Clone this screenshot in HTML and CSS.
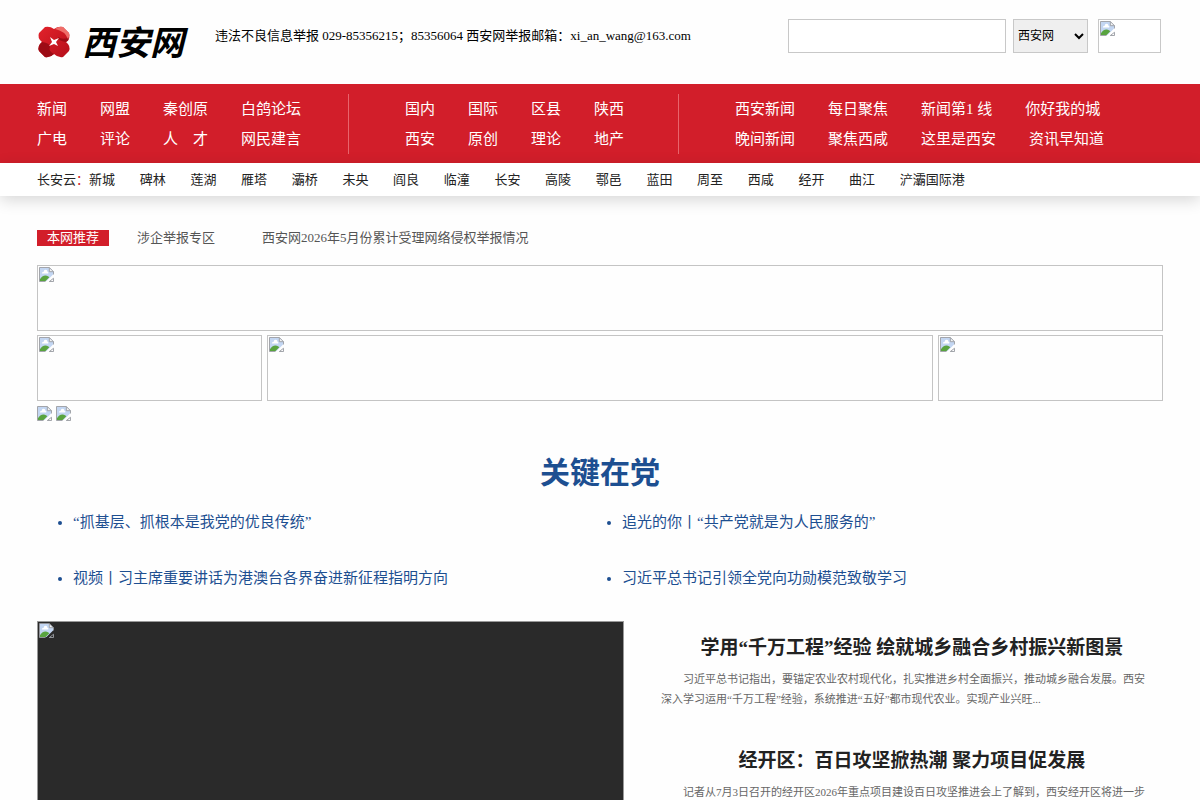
FILE: index.html
```
<!DOCTYPE html>
<html lang="zh-CN">
<head>
    <meta charset="UTF-8">
    <meta name="viewport" content="width=device-width, initial-scale=1.0">
    <title>西安网</title>
    <link rel="stylesheet" href="styles.css">
</head>
<body>

    <svg class="sprite" aria-hidden="true">
        <symbol id="pic" viewBox="0 0 16 16">
            <path d="M1 1h10l4 4v3L8 15H1z" fill="#c3d6f2"/>
            <path d="M3 7a2 2 0 0 1 2-2 2 2 0 0 1 4 0 1 1 0 0 1 0 2z" fill="#fff"/>
            <path d="M1 15v-2c2-3 5-5 9-3l1 1-4 4z" fill="#59a43f"/>
            <path d="M11 1v4h4z" fill="#f4f4f4"/>
            <path d="M15.500 8V5L11 .5H.5v15H7M11 .5V5h4.500M11 15.500h4.500V12z" fill="none" stroke="#9a9da3"/>
        </symbol>
    </svg>

    <header class="container">
        <a class="logo" href="#" aria-label="西安网">
            <svg width="154" height="46" viewBox="0 0 154 46">
                <defs>
                    <linearGradient id="petal" x1="0" y1="0" x2="1" y2="1">
                        <stop offset="0" stop-color="#e3222b"/>
                        <stop offset="1" stop-color="#b50f1a"/>
                    </linearGradient>
                </defs>
                <g transform="translate(17 23)">
                    <path d="M0-13Q4-16 9-15L15-9Q17-4 12 0Q17 4 15 9L9 15Q4 16 0 12Q-4 16-9 15L-15 9Q-17 4-12 0Q-17-4-15-9L-9-15Q-4-16 0-13z" fill="url(#petal)"/>
                    <path d="M-12 0Q-4 1-4 5Q-6 9 0 12Q-4 16-9 15L-15 9Q-17 4-12 0zM12 0Q4-1 4-5Q8-2 14-4Q16-2 12 0z" fill="#9c0c15"/>
                    <path d="M1-13Q5-16 9-15L15-9Q16-6 14-3Q11-11 1-13z" fill="#ef6d68"/>
                    <path d="M-4-5L0-2L5-4L2 0L4 4L0 2L-5 4L-2 0z" fill="#fff"/>
                </g>
                <text class="logo-text" x="45" y="36">西安网</text>
            </svg>
        </a>
        <p class="report">违法不良信息举报 029-85356215；85356064 西安网举报邮箱：xi_an_wang@163.com</p>
        <form class="search" action="#">
            <input type="text" name="q" aria-label="搜索">
            <select name="site" aria-label="站点">
                <option>西安网</option>
            </select>
            <button type="submit" aria-label="搜索"><svg class="pic"><use href="#pic"/></svg></button>
        </form>
    </header>

    <nav class="main-nav">
        <div class="container nav-groups">
            <div class="group">
                <div class="row"><a href="#">新闻</a><a href="#">网盟</a><a href="#">秦创原</a><a href="#">白鸽论坛</a></div>
                <div class="row"><a href="#">广电</a><a href="#">评论</a><a href="#">人　才</a><a href="#">网民建言</a></div>
            </div>
            <div class="group">
                <div class="row"><a href="#">国内</a><a href="#">国际</a><a href="#">区县</a><a href="#">陕西</a></div>
                <div class="row"><a href="#">西安</a><a href="#">原创</a><a href="#">理论</a><a href="#">地产</a></div>
            </div>
            <div class="group">
                <div class="row"><a href="#">西安新闻</a><a href="#">每日聚焦</a><a href="#">新闻第1 线</a><a href="#">你好我的城</a></div>
                <div class="row"><a href="#">晚间新闻</a><a href="#">聚焦西咸</a><a href="#">这里是西安</a><a href="#">资讯早知道</a></div>
            </div>
        </div>
    </nav>

    <nav class="sub-nav">
        <div class="container districts">
            <span>长安云<b>：</b></span>
            <div class="district-list">
                <a href="#">新城</a>
                <a href="#">碑林</a>
                <a href="#">莲湖</a>
                <a href="#">雁塔</a>
                <a href="#">灞桥</a>
                <a href="#">未央</a>
                <a href="#">阎良</a>
                <a href="#">临潼</a>
                <a href="#">长安</a>
                <a href="#">高陵</a>
                <a href="#">鄠邑</a>
                <a href="#">蓝田</a>
                <a href="#">周至</a>
                <a href="#">西咸</a>
                <a href="#">经开</a>
                <a href="#">曲江</a>
                <a href="#">浐灞国际港</a>
            </div>
        </div>
    </nav>

    <main class="container">
        <div class="recommend">
            <span class="tag">本网推荐</span>
            <a href="#">涉企举报专区</a>
            <a href="#">西安网2026年5月份累计受理网络侵权举报情况</a>
        </div>

        <div class="banners">
            <a class="banner wide" href="#" aria-label="专题"><svg class="pic"><use href="#pic"/></svg></a>
            <a class="banner" href="#" aria-label="专题"><svg class="pic"><use href="#pic"/></svg></a>
            <a class="banner" href="#" aria-label="专题"><svg class="pic"><use href="#pic"/></svg></a>
            <a class="banner" href="#" aria-label="专题"><svg class="pic"><use href="#pic"/></svg></a>
        </div>
        <div class="small-pics">
            <svg class="pic"><use href="#pic"/></svg>
            <svg class="pic"><use href="#pic"/></svg>
        </div>

        <h1><a href="#">关键在党</a></h1>
        <ul class="headlines">
            <li><a href="#">“抓基层、抓根本是我党的优良传统”</a></li>
            <li><a href="#">追光的你丨“共产党就是为人民服务的”</a></li>
            <li><a href="#">视频丨习主席重要讲话为港澳台各界奋进新征程指明方向</a></li>
            <li><a href="#">习近平总书记引领全党向功勋模范致敬学习</a></li>
        </ul>

        <div class="focus">
            <a class="slide" href="#" aria-label="焦点图"><svg class="pic"><use href="#pic"/></svg></a>
            <section class="stories">
                <article>
                    <h2><a href="#">学用“千万工程”经验 绘就城乡融合乡村振兴新图景</a></h2>
                    <p>习近平总书记指出，要锚定农业农村现代化，扎实推进乡村全面振兴，推动城乡融合发展。西安深入学习运用“千万工程”经验，系统推进“五好”都市现代农业。实现产业兴旺...</p>
                </article>
                <article>
                    <h2><a href="#">经开区：百日攻坚掀热潮 聚力项目促发展</a></h2>
                    <p>记者从7月3日召开的经开区2026年重点项目建设百日攻坚推进会上了解到，西安经开区将进一步</p>
                </article>
            </section>
        </div>
    </main>

</body>
</html>
```
FILE: styles.css
```
body {
    margin: 0;
    padding: 0;
    font-family: "Liberation Serif", "Noto Sans CJK SC", serif;
    font-size: 13px;
    background-color: #fefefe;
    color: #222;
}

a {
    color: inherit;
    text-decoration: none;
}

.container {
    width: 94%;
    max-width: 1126px;
    margin: 0 auto;
}

.sprite {
    display: none;
}

.pic {
    display: block;
    width: 15px;
    height: 15px;
}

header {
    display: flex;
    height: 84px;
}

.logo {
    width: 154px;
    margin-top: 19px;
}

.logo-text {
    font-family: "Noto Sans CJK SC", sans-serif;
    font-size: 34px;
    font-weight: bold;
    font-style: italic;
    fill: #000;
}

.report {
    margin: 26px 0 0 24px;
    line-height: 20px;
    color: #000;
}

.search {
    display: flex;
    align-items: flex-start;
    margin: 19px 2px 0 auto;
}

.search input,
.search select,
.search button {
    box-sizing: border-box;
    height: 34px;
    border: 1px solid #c8c8c8;
    font-family: inherit;
    font-size: 12px;
    border-radius: 0;
}

.search input {
    width: 218px;
    background-color: #fff;
}

.search select {
    width: 75px;
    margin: 0 10px 0 7px;
    background-color: #efefef;
    color: #000;
}

.search button {
    width: 63px;
    padding: 1px;
    display: flex;
    align-items: flex-start;
    background-color: #fff;
}

.main-nav {
    background-color: #d21e2a;
    color: #fff;
    font-size: 15px;
}

.nav-groups {
    display: grid;
    grid-template-columns: 312px 330px 1fr;
    padding: 10px 0 9px;
}

.group + .group {
    padding-left: 56px;
}

.group:not(:last-child) {
    border-right: 1px solid #e8646c;
}

.row {
    display: flex;
    gap: 33px;
    line-height: 30px;
    white-space: nowrap;
}

.sub-nav {
    background-color: #fff;
    box-shadow: 0 4px 16px rgba(0, 0, 0, 0.16);
}

.districts {
    display: flex;
    line-height: 33px;
    white-space: nowrap;
}

.districts b {
    color: #d21e2a;
    font-weight: normal;
}

.district-list {
    display: flex;
    justify-content: space-between;
    width: 876px;
}

.recommend {
    display: flex;
    margin-top: 34px;
    line-height: 16px;
    color: #555;
}

.tag {
    padding: 0 10px;
    margin-right: 28px;
    background-color: #d21e2a;
    color: #fff;
}

.recommend a + a {
    margin-left: 47px;
}

.banners {
    display: grid;
    grid-template-columns: 225px 1fr 225px;
    gap: 4px 5px;
    margin-top: 19px;
}

.banner {
    height: 62px;
    padding: 1px;
    border: 1px solid #c4c4c4;
}

.banner.wide {
    grid-column: 1 / -1;
}

.small-pics {
    display: flex;
    gap: 4px;
    margin-top: 5px;
}

h1 {
    margin: 31px 0 0;
    font-size: 30px;
    line-height: 42px;
    text-align: center;
    color: #1d4f91;
}

.headlines {
    display: grid;
    grid-template-columns: 1fr 1fr;
    column-gap: 8px;
    margin: 0;
    padding-left: 36px;
    font-size: 15px;
    line-height: 56px;
    color: #1d4f91;
}

.focus {
    display: grid;
    grid-template-columns: 587px 1fr;
    gap: 37px;
    margin-top: 15px;
}

.slide {
    height: 360px;
    padding: 1px;
    border: 1px solid #999;
    background-color: #2a2a2a;
}

h2 {
    margin: 0;
    font-size: 19px;
    line-height: 28px;
    text-align: center;
}

.stories {
    padding-top: 13px;
}

.stories p {
    margin: 7px 10px 38px 0;
    font-size: 11px;
    line-height: 20px;
    text-indent: 2em;
    color: #666;
}
```
